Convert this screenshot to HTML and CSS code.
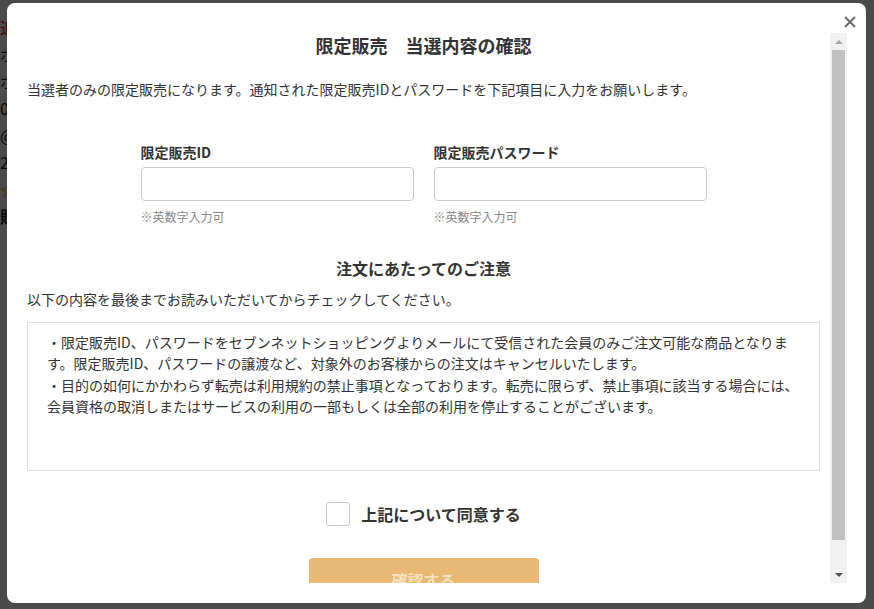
FILE: index.html
```html
<!DOCTYPE html>
<html>
<head>
  <title>限定販売 当選内容の確認</title>
  <link rel="stylesheet" href="styles.css">
</head>
<body>

  <div class="page">
    <p class="page-line red">追</p>
    <p class="page-line">ポ</p>
    <p class="page-line">ポ</p>
    <p class="page-line">0</p>
    <p class="page-line">@</p>
    <p class="page-line">2</p>
    <p class="page-line gold">☆</p>
    <p class="page-line strong">販</p>
  </div>

  <div class="overlay">
    <div class="modal">
      <button class="close" aria-label="閉じる">
        <svg width="12" height="12" viewBox="0 0 12 12">
          <path d="M1 1 L11 11 M11 1 L1 11" stroke="#6b6b6b" stroke-width="2" fill="none"/>
        </svg>
      </button>

      <div class="modal-body">
        <div class="scroll-pane">
          <h2 class="title">限定販売　当選内容の確認</h2>
          <p class="intro">当選者のみの限定販売になります。通知された限定販売IDとパスワードを下記項目に入力をお願いします。</p>

          <div class="fields">
            <div class="field">
              <label class="field-label">限定販売ID</label>
              <input class="field-input" type="text">
              <p class="hint">※英数字入力可</p>
            </div>
            <div class="field">
              <label class="field-label">限定販売パスワード</label>
              <input class="field-input" type="password">
              <p class="hint">※英数字入力可</p>
            </div>
          </div>

          <h3 class="notice-title">注文にあたってのご注意</h3>
          <p class="lead">以下の内容を最後までお読みいただいてからチェックしてください。</p>

          <div class="notice">
            ・限定販売ID、パスワードをセブンネットショッピングよりメールにて受信された会員のみご注文可能な商品となります。限定販売ID、パスワードの譲渡など、対象外のお客様からの注文はキャンセルいたします。<br>
            ・目的の如何にかかわらず転売は利用規約の禁止事項となっております。転売に限らず、禁止事項に該当する場合には、会員資格の取消しまたはサービスの利用の一部もしくは全部の利用を停止することがございます。
          </div>

          <label class="agree">
            <input class="agree-check" type="checkbox">
            <span class="agree-text">上記について同意する</span>
          </label>

          <button class="confirm" disabled>確認する</button>
        </div>

        <div class="scrollbar">
          <div class="sb-btn"><span class="arrow-up"></span></div>
          <div class="thumb"></div>
          <div class="sb-track"></div>
          <div class="sb-btn"><span class="arrow-down"></span></div>
        </div>
      </div>
    </div>
  </div>

</body>
</html>
```

FILE: styles.css
```css
* {
  box-sizing: border-box;
}
body {
  margin: 0;
  font-family: "Noto Sans CJK JP", "Noto Sans", sans-serif;
  font-size: 14px;
  color: #333;
  background: #fff;
}
.page {
  padding-top: 14px;
}
.page-line {
  margin: 0;
  font-size: 16px;
  line-height: 27px;
  color: #222;
}
.page-line.red {
  color: #c8102e;
}
.page-line.gold {
  color: #e0a000;
}
.page-line.strong {
  font-weight: 700;
}
.overlay {
  position: fixed;
  top: 0;
  left: 0;
  right: 0;
  bottom: 0;
  background: rgba(0, 0, 0, 0.71);
  padding: 3px 8px 6px 7px;
}
.modal {
  position: relative;
  width: 859px;
  height: 600px;
  background: #fff;
  border-radius: 8px;
  padding: 30px 19px 20px 20px;
}
.close {
  position: absolute;
  top: 13px;
  right: 10px;
  width: 12px;
  height: 12px;
  padding: 0;
  border: none;
  background: none;
  cursor: pointer;
  display: flex;
}
.modal-body {
  display: flex;
  height: 550px;
}
.scroll-pane {
  flex: 1;
  overflow: hidden;
  padding-right: 10px;
}
.title {
  margin: 0;
  font-size: 18px;
  font-weight: 700;
  line-height: 24px;
  text-align: center;
}
.intro {
  margin: 22px 0 0;
  line-height: 21px;
}
.fields {
  display: flex;
  justify-content: center;
  gap: 20px;
  margin-top: 42px;
}
.field {
  width: 273px;
}
.field-label {
  display: block;
  font-weight: 700;
  line-height: 20px;
}
.field-input {
  display: block;
  width: 100%;
  height: 34px;
  margin-top: 5px;
  border: 1px solid #c9c9c9;
  border-radius: 4px;
  background: #fff;
}
.hint {
  margin: 7px 0 0;
  font-size: 12px;
  line-height: 18px;
  color: #888;
}
.notice-title {
  margin: 31px 0 0;
  font-size: 16px;
  font-weight: 700;
  line-height: 22px;
  text-align: center;
}
.lead {
  margin: 10px 0 0;
  line-height: 21px;
}
.notice {
  margin-top: 12px;
  height: 149px;
  border: 1px solid #e0e0e0;
  padding: 9px 14px 0 19px;
  line-height: 21.3px;
}
.agree {
  display: flex;
  justify-content: center;
  align-items: center;
  margin-top: 31px;
  height: 24px;
}
.agree-check {
  appearance: none;
  -webkit-appearance: none;
  margin: 0;
  width: 24px;
  height: 24px;
  border: 1px solid #c9c9c9;
  border-radius: 3px;
  background: #fff;
}
.agree-text {
  margin-left: 11px;
  font-size: 16px;
  font-weight: 700;
}
.confirm {
  display: block;
  margin: 32px auto 0;
  width: 230px;
  height: 44px;
  border: none;
  border-radius: 4px;
  background: #e8b974;
  color: #f6e2bd;
  font-family: inherit;
  font-size: 16px;
  font-weight: 700;
}
.scrollbar {
  width: 17px;
  background: #f1f1f1;
  display: flex;
  flex-direction: column;
  align-items: center;
}
.sb-btn {
  height: 17px;
  width: 100%;
  display: flex;
  align-items: center;
  justify-content: center;
}
.arrow-up {
  width: 0;
  height: 0;
  border-left: 4px solid transparent;
  border-right: 4px solid transparent;
  border-bottom: 4px solid #a3a3a3;
}
.arrow-down {
  width: 0;
  height: 0;
  border-left: 4px solid transparent;
  border-right: 4px solid transparent;
  border-top: 4px solid #505050;
}
.thumb {
  width: 13px;
  height: 490px;
  background: #c1c1c1;
}
.sb-track {
  flex: 1;
}
```
